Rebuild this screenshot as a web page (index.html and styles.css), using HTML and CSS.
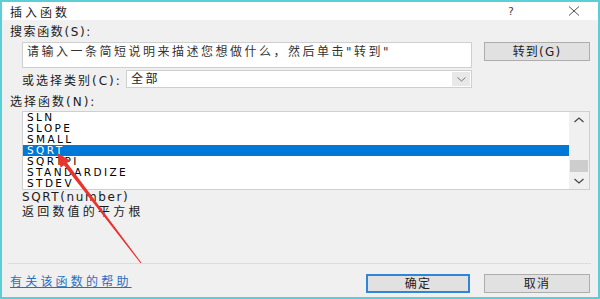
FILE: index.html
```html
<!DOCTYPE html>
<html>
<head>
  <meta charset="UTF-8">
  <title>插入函数</title>
  <link rel="stylesheet" href="styles.css">
</head>
<body>
<div class="dialog">
  <div class="titlebar">
    <span class="title">插入函数</span>
    <span class="help">?</span>
    <span class="close">
      <svg width="12" height="10" viewBox="0 0 12 10"><path d="M1 0.5 L11 9.5 M11 0.5 L1 9.5" stroke="#555" stroke-width="1" fill="none"/></svg>
    </span>
  </div>

  <div class="content">
    <div class="label">搜索函数(S):</div>
    <div class="search-row">
      <div class="search-box">请输入一条简短说明来描述您想做什么，然后单击"转到"</div>
      <button class="btn">转到(G)</button>
    </div>

    <div class="cat-row">
      <span class="cat-label">或选择类别(C):</span>
      <div class="combo">
        <span class="combo-text">全部</span>
        <span class="drop">
          <svg width="9" height="5" viewBox="0 0 9 5"><path d="M0.5 0.5 L4.5 4 L8.5 0.5" stroke="#777" stroke-width="1" fill="none"/></svg>
        </span>
      </div>
    </div>

    <div class="label label-list">选择函数(N):</div>
    <div class="listbox">
      <ul class="items">
        <li>SLN</li>
        <li>SLOPE</li>
        <li>SMALL</li>
        <li class="selected">SQRT</li>
        <li>SQRTPI</li>
        <li>STANDARDIZE</li>
        <li>STDEV</li>
      </ul>
      <div class="scrollbar">
        <svg class="sb-up" width="10" height="6" viewBox="0 0 10 6"><path d="M0.5 5 L5 1 L9.5 5" stroke="#444" stroke-width="1.2" fill="none"/></svg>
        <div class="thumb"></div>
        <svg class="sb-down" width="10" height="6" viewBox="0 0 10 6"><path d="M0.5 1 L5 5 L9.5 1" stroke="#444" stroke-width="1.2" fill="none"/></svg>
      </div>
    </div>

    <div class="desc">
      <div class="desc-sig">SQRT(number)</div>
      <div class="desc-text">返回数值的平方根</div>
    </div>

    <div class="separator"></div>

    <div class="footer">
      <a class="help-link" href="#">有关该函数的帮助</a>
      <div class="buttons">
        <button class="btn btn-ok">确定</button>
        <button class="btn btn-cancel">取消</button>
      </div>
    </div>
  </div>

  <svg class="arrow" width="600" height="299" viewBox="0 0 600 299">
    <polygon points="57,153 70.3,160.5 67.1,162.9 141.4,262.7 140.6,263.3 63.9,165.3 60.7,167.7" fill="#e8332f"/>
  </svg>
</div>
</body>
</html>
```

FILE: styles.css
```css
body {
  margin: 0;
  background: #ffffff;
  font-family: "DejaVu Sans", "Noto Sans CJK SC", sans-serif;
  font-size: 12px;
  color: #1a1a1a;
}

.dialog {
  position: relative;
  width: 600px;
  height: 299px;
  box-sizing: border-box;
  border: 2px solid #5ccfd6;
  background: #f0f0f0;
  overflow: hidden;
}

.titlebar {
  display: flex;
  align-items: center;
  height: 18px;
  background: #ffffff;
  padding-left: 8px;
}
.title {
  letter-spacing: 3px;
  flex: 1;
}
.help {
  width: 60px;
  color: #444;
  font-size: 11px;
}
.close {
  width: 30px;
  display: flex;
}

.content {
  padding: 5px 8px 0 8px;
}

.label {
  line-height: 14px;
  letter-spacing: 1.6px;
}

.search-row {
  display: flex;
  gap: 12px;
  margin: 3px 0 0 12px;
  align-items: flex-start;
}
.search-box {
  width: 450px;
  height: 26px;
  box-sizing: border-box;
  background: #fff;
  border: 1px solid #cfcfcf;
  padding: 2px 4px;
  line-height: 14px;
  color: #333;
  letter-spacing: 2.5px;
  white-space: nowrap;
}

.btn {
  height: 19px;
  box-sizing: border-box;
  background: #e1e1e1;
  border: 1px solid #adadad;
  font-family: "DejaVu Sans", "Noto Sans CJK SC", sans-serif;
  font-size: 12px;
  letter-spacing: 1.2px;
  color: #222;
  padding: 0;
  line-height: 16px;
}
.search-row .btn {
  width: 106px;
}

.cat-row {
  display: flex;
  align-items: center;
  margin: 2px 0 0 12px;
}
.cat-label {
  width: 104px;
  letter-spacing: 2px;
}
.combo {
  display: flex;
  width: 346px;
  height: 18px;
  box-sizing: border-box;
  background: #fff;
  border: 1px solid #cfcfcf;
}
.combo-text {
  flex: 1;
  padding-left: 4px;
  line-height: 16px;
  letter-spacing: 2.4px;
}
.drop {
  width: 18px;
  margin: 1px;
  background: #e8e8e8;
  display: flex;
  align-items: center;
  justify-content: center;
}

.label-list {
  margin-top: 7px;
  letter-spacing: 2px;
}

.listbox {
  display: flex;
  margin: 2px 0 0 12px;
  width: 568px;
  height: 79px;
  box-sizing: border-box;
  background: #fff;
  border: 1px solid #cfcfcf;
}
.items {
  list-style: none;
  margin: 0;
  padding: 0;
  flex: 1;
}
.items li {
  height: 11px;
  line-height: 11px;
  padding-left: 4px;
  font-size: 10.5px;
  letter-spacing: 2.4px;
  color: #000;
}
.items li.selected {
  background: #0078d7;
  color: #fff;
}
.scrollbar {
  width: 20px;
  background: #f0f0f0;
  display: flex;
  flex-direction: column;
  align-items: center;
}
.sb-up {
  margin-top: 5px;
}
.thumb {
  width: 18px;
  height: 12px;
  background: #cdcdcd;
  margin-top: 37px;
}
.sb-down {
  margin-top: 6px;
}

.desc {
  margin-left: 12px;
  line-height: 15px;
}
.desc-sig {
  letter-spacing: 1.6px;
}
.desc-text {
  letter-spacing: 3.2px;
}

.separator {
  height: 1px;
  background: #dcdcdc;
  margin: 43px -1px 0 -2px;
}

.footer {
  display: flex;
  justify-content: space-between;
  margin-top: 10px;
}
.help-link {
  color: #2a6ebb;
  text-decoration: underline;
  letter-spacing: 3.2px;
  line-height: 14px;
  margin-top: 1px;
}
.buttons {
  display: flex;
  gap: 14px;
}
.btn-ok {
  width: 104px;
  border: 2px solid #2f86d8;
}
.btn-cancel {
  width: 106px;
}

.arrow {
  position: absolute;
  left: -2px;
  top: -2px;
}
```
